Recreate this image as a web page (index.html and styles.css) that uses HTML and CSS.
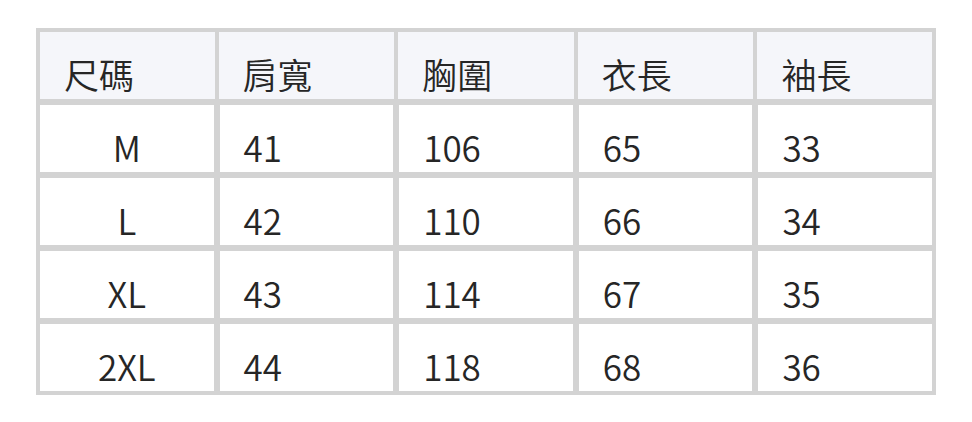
FILE: index.html
```html
<!DOCTYPE html>
<html lang="zh-Hant">
<head>
<meta charset="utf-8">
<link rel="stylesheet" href="styles.css">
</head>
<body>
<table class="size-table">
  <thead>
    <tr><th>尺碼</th><th>肩寬</th><th>胸圍</th><th>衣長</th><th>袖長</th></tr>
  </thead>
  <tbody>
    <tr><td class="size">M</td><td>41</td><td>106</td><td>65</td><td>33</td></tr>
    <tr><td class="size">L</td><td>42</td><td>110</td><td>66</td><td>34</td></tr>
    <tr><td class="size">XL</td><td>43</td><td>114</td><td>67</td><td>35</td></tr>
    <tr><td class="size">2XL</td><td>44</td><td>118</td><td>68</td><td>36</td></tr>
  </tbody>
</table>
</body>
</html>
```
FILE: styles.css
```css
html, body {
  margin: 0;
  padding: 0;
  background: #ffffff;
}
body {
  padding: 28px 0 0 36px;
  font-family: "Noto Sans CJK TC", "Noto Sans", sans-serif;
  color: #262626;
}
.size-table {
  border-collapse: separate;
  border-spacing: 0;
  border: 1px solid #d3d3d3;
  width: 900px;
  table-layout: fixed;
  font-size: 35px;
  line-height: 35px;
  font-weight: 350;
}
.size-table th,
.size-table td {
  box-sizing: border-box;
  text-align: left;
  vertical-align: bottom;
  padding: 0 0 8px 24px;
  font-weight: 350;
}
.size-table th {
  background: #f5f6fa;
  border: 2px solid #d3d3d3;
  border-top-width: 3px;
  border-bottom-width: 3px;
  height: 73px;
}
.size-table th:first-child { border-left-width: 3px; }
.size-table th:last-child { border-right-width: 3px; }
.size-table td {
  background: #ffffff;
  border: 3px solid #d3d3d3;
  height: 73px;
}
.size-table td.size {
  text-align: center;
  padding-left: 0;
}
```
